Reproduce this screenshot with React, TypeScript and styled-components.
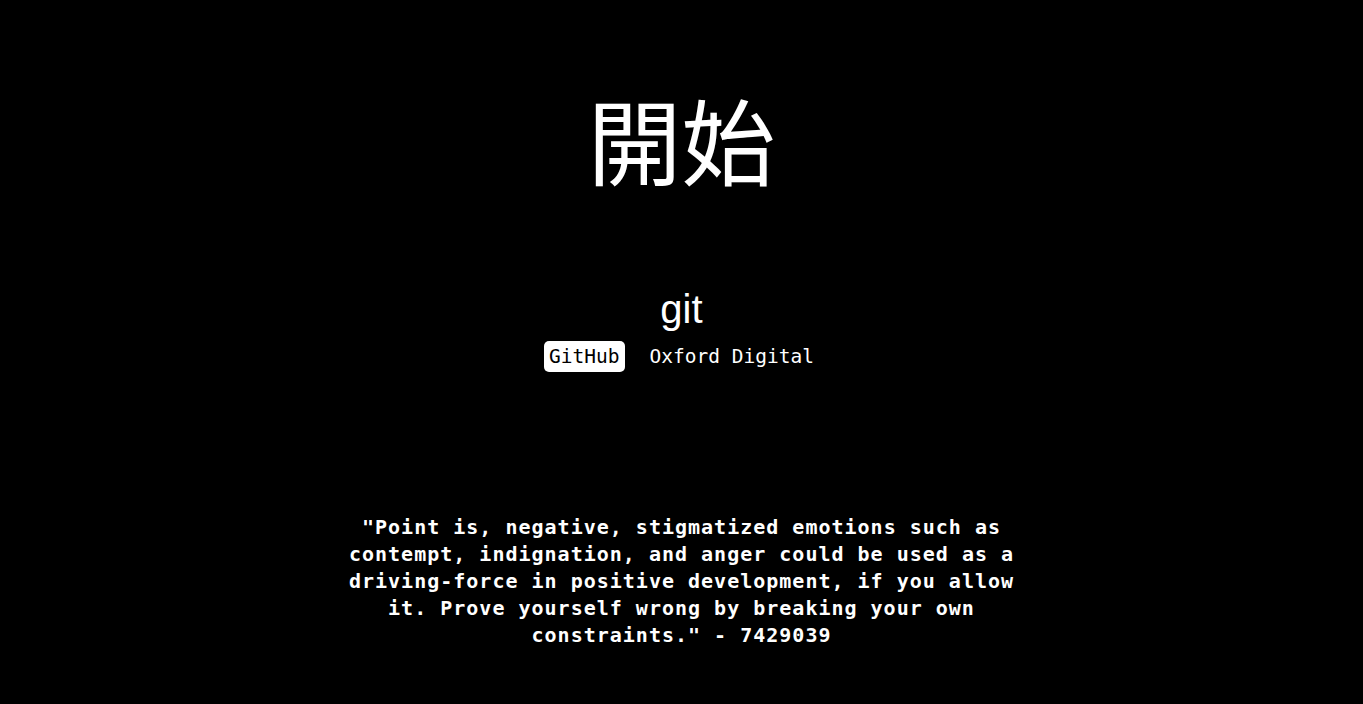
import React from 'react';
import styled, { createGlobalStyle } from 'styled-components';

const GlobalStyle = createGlobalStyle`
  html, body {
    margin: 0;
    padding: 0;
    background: #000;
  }
`;

const Page = styled.main`
  min-height: 704px;
  display: flex;
  flex-direction: column;
  align-items: center;
  background: #000;
  color: #fff;
  padding-top: 90px;
  box-sizing: border-box;
`;

const Title = styled.h1`
  margin: 0;
  font-family: "Noto Sans CJK TC", "Noto Sans CJK JP", sans-serif;
  font-weight: 400;
  font-size: 94px;
  line-height: 96px;
`;

const Links = styled.section`
  margin-top: 100px;
  display: flex;
  flex-direction: column;
  align-items: center;
`;

const Heading = styled.h2`
  margin: 0;
  font-family: "Liberation Sans", Arial, sans-serif;
  font-weight: 400;
  font-size: 40px;
  line-height: 46px;
`;

const LinkRow = styled.nav`
  margin-top: 9px;
  display: flex;
  align-items: center;
  gap: 20px;
`;

const LinkItem = styled.a<{ active?: boolean }>`
  font-family: "DejaVu Sans Mono", "Liberation Mono", monospace;
  font-size: 19.5px;
  line-height: 31px;
  padding: 0 5px;
  border-radius: 5px;
  text-decoration: none;
  color: ${p => (p.active ? '#000' : '#fff')};
  background: ${p => (p.active ? '#fff' : 'transparent')};
`;

const Quote = styled.blockquote`
  margin: 142px 0 0;
  width: 680px;
  text-align: center;
  font-family: "DejaVu Sans Mono", "Liberation Mono", monospace;
  font-weight: 700;
  font-size: 20px;
  letter-spacing: 1px;
  line-height: 27px;
`;

const App: React.FC = () => (
  <>
    <GlobalStyle />
    <Page>
      <Title>開始</Title>
      <Links>
        <Heading>git</Heading>
        <LinkRow>
          <LinkItem active href="#">GitHub</LinkItem>
          <LinkItem href="#">Oxford Digital</LinkItem>
        </LinkRow>
      </Links>
      <Quote>
        "Point is, negative, stigmatized emotions such as contempt, indignation, and anger
        could be used as a driving-force in positive development, if you allow it. Prove
        yourself wrong by breaking your own constraints." - 7429039
      </Quote>
    </Page>
  </>
);

export default App;
